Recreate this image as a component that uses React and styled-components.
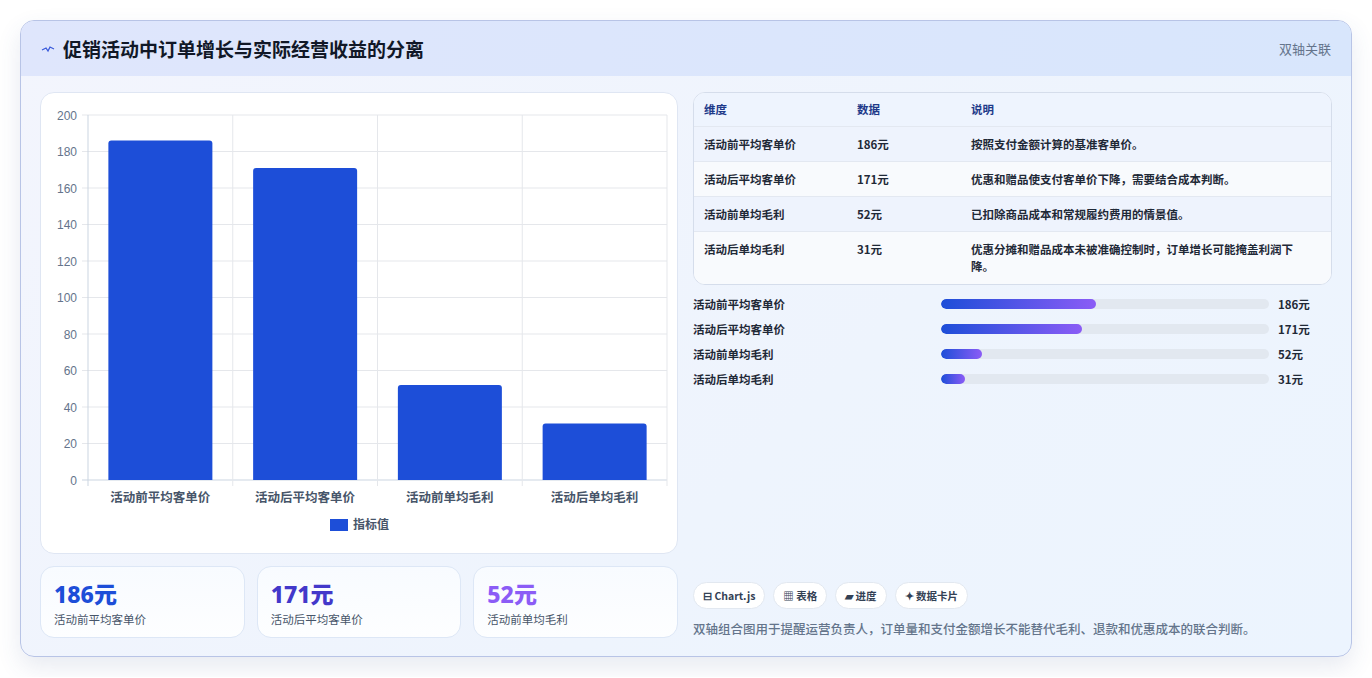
import React from "react";
import styled, { createGlobalStyle } from "styled-components";

const Global = createGlobalStyle`
  html, body { margin: 0; padding: 0; background: #fff; }
  body { font-family: "Noto Sans CJK SC", "Noto Sans", sans-serif; color: #1e293b; }
`;

const Page = styled.div`
  padding: 20px 20px 20px 20px;
  width: 1372px; box-sizing: border-box;
`;
const Card = styled.div`
  width: 1332px; height: 637px; box-sizing: border-box;
  border: 1px solid #b8c4e6; border-radius: 14px; overflow: hidden;
  background: linear-gradient(135deg, #f3f5fd 0%, #eef4fd 60%, #ecf4fe 100%);
  box-shadow: 0 10px 24px rgba(60, 80, 140, 0.12);
  display: flex; flex-direction: column;
`;
const Header = styled.div`
  height: 55px; flex: none; display: flex; align-items: center; justify-content: space-between;
  padding: 0 20px 0 20px;
  background: linear-gradient(90deg, #dfe6fc, #d8e6fc);
`;
const Title = styled.h1`
  margin: 0; font-size: 19px; font-weight: 700; color: #111827; display: flex; align-items: center; gap: 8px;
`;
const Tag = styled.span` font-size: 13px; color: #64748b; `;
const Body = styled.div`
  flex: 1; display: grid; grid-template-columns: 638px 639px; gap: 15px; padding: 16px 19px 19px 19px;
`;
const Col = styled.div` display: flex; flex-direction: column; gap: 12px; min-height: 0; `;
const Panel = styled.div`
  background: #fff; border: 1px solid #dfe6f3; border-radius: 14px; height: 462px; box-sizing: border-box;
`;
const Kpis = styled.div` display: grid; grid-template-columns: repeat(3, 1fr); gap: 12px; `;
const Kpi = styled.div`
  height: 72px; box-sizing: border-box; padding: 12px 13px; border-radius: 14px;
  border: 1px solid #dde7f6; background: linear-gradient(180deg, #f8fbff, #fdfeff);
`;
const KpiVal = styled.div` font-size: 23px; font-weight: 800; line-height: 30px; color: ${p => p.c}; font-family: "Noto Sans", "Noto Sans CJK SC", sans-serif; `;
const KpiLbl = styled.div` font-size: 11.5px; color: #475569; margin-top: 2px; `;

const Table = styled.div`
  border: 1px solid #d5ddeb; border-radius: 12px; overflow: hidden; background: #fff;
`;
const Row = styled.div`
  display: grid; grid-template-columns: 153px 114px 1fr; padding: 0 28px 0 10px;
  min-height: ${p => p.h || 35}px; align-items: start; padding-top: ${p => p.pt || 10}px; box-sizing: border-box;
  background: ${p => p.bg}; border-top: ${p => p.first ? "none" : "1px solid #e3e8f1"};
  font-size: 11.5px; font-weight: 600; color: #1f2937; line-height: 17px;
`;
const HeadRow = styled(Row)` color: #1e3a8a; font-weight: 700; `;
const Bars = styled.div` display: flex; flex-direction: column; gap: 7px; margin-top: 10px; `;
const BarRow = styled.div`
  display: grid; grid-template-columns: 239px 328px 1fr; column-gap: 9px; align-items: center; height: 18px;
  font-size: 11.5px; font-weight: 600; color: #1f2937;
`;
const Track = styled.div` height: 10px; border-radius: 5px; background: #e2e8f0; overflow: hidden; `;
const Fill = styled.div` height: 100%; border-radius: 5px; background: linear-gradient(90deg, #1d4ed8, #8b5cf6); `;
const Spacer = styled.div` flex: 1; `;
const Chips = styled.div` display: flex; gap: 8px; `;
const Chip = styled.span`
  height: 27px; box-sizing: border-box; padding: 0 9px; border-radius: 14px; border: 1px solid #e2e8f0; background: #fff;
  display: inline-flex; align-items: center; gap: 3px; font-size: 10.5px; font-weight: 700; color: #334155;
`;
const Note = styled.p` margin: 10px 0 0; font-size: 12.5px; color: #64748b; font-weight: 500; `;

const data = [
  ["活动前平均客单价", 186, "按照支付金额计算的基准客单价。", 47.3],
  ["活动后平均客单价", 171, "优惠和赠品使支付客单价下降，需要结合成本判断。", 43],
  ["活动前单均毛利", 52, "已扣除商品成本和常规履约费用的情景值。", 12.5],
  ["活动后单均毛利", 31, "优惠分摊和赠品成本未被准确控制时，订单增长可能掩盖利润下降。", 7.3],
];

function Chart() {
  const x0 = 47, x1 = 626, y0 = 22, y1 = 387;
  const cw = (x1 - x0) / 4;
  const ys = [0, 20, 40, 60, 80, 100, 120, 140, 160, 180, 200];
  const yy = v => y1 - (v / 200) * (y1 - y0);
  return (
    <svg width="638" height="460" style={{ display: "block" }}>
      {ys.map(v => (
        <g key={v}>
          <line x1={x0 - 6} x2={x1} y1={yy(v)} y2={yy(v)} stroke={v === 0 ? "#cbd5e1" : "#e5e7eb"} />
          <text x={x0 - 11} y={yy(v) + 4.5} textAnchor="end" fontSize="12" fill="#64748b" fontFamily="Liberation Sans, sans-serif">{v}</text>
        </g>
      ))}
      {[0, 1, 2, 3, 4].map(i => (
        <line key={i} x1={x0 + i * cw} x2={x0 + i * cw} y1={y0} y2={y1 + 6} stroke={i === 0 ? "#cbd5e1" : "#e5e7eb"} />
      ))}
      {data.map((d, i) => {
        const cx = x0 + cw * i + cw / 2;
        return (
          <g key={i}>
            <path d={`M${cx - 52} ${y1} V${yy(d[1]) + 3} Q${cx - 52} ${yy(d[1])} ${cx - 49} ${yy(d[1])} H${cx + 49} Q${cx + 52} ${yy(d[1])} ${cx + 52} ${yy(d[1]) + 3} V${y1} Z`} fill="#1d4ed8" />
            <text x={cx} y={409} textAnchor="middle" fontSize="12.5" fill="#475569" fontWeight="600" fontFamily="Noto Sans CJK SC, sans-serif">{d[0]}</text>
          </g>
        );
      })}
      <rect x="289" y="426" width="18" height="12" fill="#1d4ed8" />
      <text x="312" y="436" fontSize="12" fill="#475569" fontWeight="600" fontFamily="Noto Sans CJK SC, sans-serif">指标值</text>
    </svg>
  );
}

export default function App() {
  return (
    <Page>
      <Global />
      <Card>
        <Header>
          <Title>
            <svg width="14" height="10" viewBox="0 0 14 10"><path d="M1 6 L5 4 L7 7 L9 3 L13 5" stroke="#3b5bdb" strokeWidth="1.3" fill="none" /></svg>
            促销活动中订单增长与实际经营收益的分离
          </Title>
          <Tag>双轴关联</Tag>
        </Header>
        <Body>
          <Col>
            <Panel><Chart /></Panel>
            <Kpis>
              <Kpi><KpiVal c="#1d4ed8">186元</KpiVal><KpiLbl>活动前平均客单价</KpiLbl></Kpi>
              <Kpi><KpiVal c="#4338ca">171元</KpiVal><KpiLbl>活动后平均客单价</KpiLbl></Kpi>
              <Kpi><KpiVal c="#8b5cf6">52元</KpiVal><KpiLbl>活动前单均毛利</KpiLbl></Kpi>
            </Kpis>
          </Col>
          <Col style={{ gap: 0 }}>
            <Table>
              <HeadRow first h={33} pt={8} bg="#eef4fe"><span>维度</span><span>数据</span><span>说明</span></HeadRow>
              {data.map((d, i) => (
                <Row key={i} h={i === 3 ? 53 : 35} pt={9} bg={i % 2 === 0 ? "#eef3fd" : "#f8fafd"}>
                  <span>{d[0]}</span><span>{d[1]}元</span><span>{d[2]}</span>
                </Row>
              ))}
            </Table>
            <Bars>
              {data.map((d, i) => (
                <BarRow key={i}>
                  <span>{d[0]}</span>
                  <Track><Fill style={{ width: d[3] + "%" }} /></Track>
                  <span>{d[1]}元</span>
                </BarRow>
              ))}
            </Bars>
            <Spacer />
            <Chips>
              <Chip>⊟ Chart.js</Chip>
              <Chip>▦ 表格</Chip>
              <Chip>▰ 进度</Chip>
              <Chip>✦ 数据卡片</Chip>
            </Chips>
            <Note>双轴组合图用于提醒运营负责人，订单量和支付金额增长不能替代毛利、退款和优惠成本的联合判断。</Note>
          </Col>
        </Body>
      </Card>
    </Page>
  );
}
